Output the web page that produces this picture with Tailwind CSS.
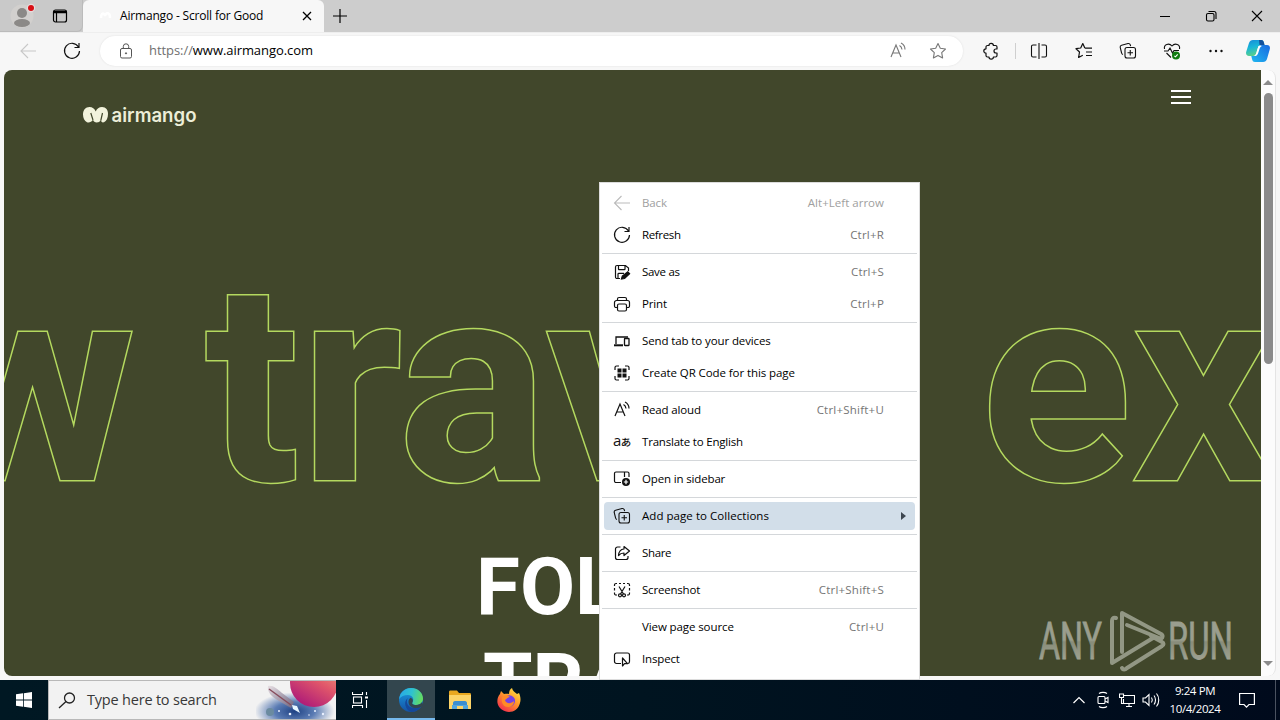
<!DOCTYPE html>
<html lang="en">
<head>
<meta charset="utf-8">
<title>Airmango - Scroll for Good</title>
<script src="https://cdn.jsdelivr.net/npm/@tailwindcss/browser@4"></script>
</head>
<body class="relative flex h-[720px] w-[1280px] flex-col overflow-hidden bg-[#f7f7f7] font-['Open_Sans',sans-serif] text-black">

<!-- Tab strip -->
<header class="flex h-8 shrink-0 bg-[#cdcdcd]">
  <div class="flex w-[83px] items-center rounded-br-md border-r border-b border-[#bbbbbb] bg-[#c9c9c9]">
    <svg class="ml-2.5 h-7 w-7" viewBox="0 0 28 28"><circle cx="12" cy="14" r="11.5" fill="#d2d0ce"/><circle cx="12" cy="11" r="5" fill="#8b8987"/><ellipse cx="12" cy="21" rx="8" ry="4" fill="#8b8987"/><circle cx="21" cy="6" r="4.2" fill="#e6dcdc"/><circle cx="21" cy="6" r="3" fill="#d80f16"/></svg>
    <svg class="ml-3.5 h-4 w-4" viewBox="0 0 16 16" fill="none" stroke="#000" stroke-width="1.2"><rect x="1.5" y="2" width="13" height="12" rx="2"/><path d="M1.5 4h13" stroke-width="2.500"/><path d="M4.5 4v10"/></svg>
  </div>
  <div class="flex w-[241px] items-center rounded-t-md bg-[#f7f7f7] pl-[15px]">
    <svg class="h-4 w-4" viewBox="0 0 16 16"><path d="M3 10c0-5 3-6 4-2 1-4 5-4 5 2" stroke="#fff" stroke-width="2.5" fill="none"/></svg>
    <span class="ml-1.5 w-[182px] text-[12px] tracking-[-0.18px] whitespace-nowrap">Airmango - Scroll for Good</span>
    <svg class="-ml-px h-3 w-3" viewBox="0 0 12 12" stroke="#000" stroke-width="1.3"><path d="M2 2l8 8M10 2l-8 8"/></svg>
  </div>
  <svg class="mt-2 ml-2 h-4 w-4" viewBox="0 0 16 16" stroke="#000" stroke-width="1.2"><path d="M8 1v14M1 8h14"/></svg>
  <div class="ml-auto flex items-center">
    <svg class="w-[46px] h-4" viewBox="0 0 46 16" stroke="#000"><path d="M18 8.500h10"/></svg>
    <svg class="w-[46px] h-4" viewBox="0 0 46 16" stroke="#000" fill="none" stroke-width="1.1"><rect x="18.500" y="5.500" width="7.500" height="7.500" rx="1.500"/><path d="M20.500 3.500h5.500a2 2 0 0 1 2 2v5.500"/></svg>
    <svg class="w-[46px] h-4" viewBox="0 0 46 16" stroke="#000" stroke-width="1.1"><path d="M18 3l10 10M28 3l-10 10"/></svg>
  </div>
</header>

<!-- Toolbar -->
<nav class="flex h-[38px] shrink-0 items-center border-t border-[#eeeeee] pb-px">
  <svg class="ml-5 h-4 w-4" viewBox="0 0 16 16" fill="none" stroke="#c8c8c8" stroke-width="1.1"><path d="M16 8H1M8 1L1 8l7 7"/></svg>
  <svg class="ml-[27px] h-[18px] w-[18px]" viewBox="0 0 18 18" fill="none" stroke="#111" stroke-width="1.2"><path d="M15.500 5A7.500 7.500 0 1 0 16.500 9M16 1v4.500h-4.500"/></svg>
  <div class="ml-[19px] flex h-[30px] w-[863px] items-center rounded-full bg-white shadow-[0_0_2px_#dddddd]">
    <svg class="ml-[18px] h-4 w-4" viewBox="0 0 16 16" fill="none" stroke="#555"><rect x="2.500" y="5.500" width="11" height="9.500" rx="1.500"/><path d="M5.300 5.500V3.500a2.700 2.700 0 0 1 5.400 0v2"/><circle cx="8" cy="10.300" r=".6" fill="#555"/></svg>
    <span class="ml-[15px] text-[13px] tracking-[-0.06px] whitespace-nowrap"><span class="text-[#707070]">https://</span>www.airmango.com</span>
    <svg class="ml-auto h-[18px] w-[18px]" viewBox="0 0 18 18" fill="none" stroke="#777" stroke-width="1.1"><path d="M2 15L7 3l5 12M4 11h6M10.500 3.500c1.500.8 2.300 2 2.500 4M12 1c2.500 1.300 4 3.500 4 6.500"/></svg>
    <svg class="mr-4 ml-[22px] h-[18px] w-[18px]" viewBox="0 0 18 18" fill="none" stroke="#777" stroke-width="1.1" stroke-linejoin="round"><path d="M9 1.500l2.300 4.800 5.200.7-3.800 3.600.9 5.300L9 13.400l-4.600 2.500.9-5.300L1.500 7l5.200-.7z"/></svg>
  </div>
  <div class="ml-1.5 flex w-[44px] justify-center"><svg class="h-[18px] w-[18px]" viewBox="0 0 18 18" fill="none" stroke="#111" stroke-width="1.2" stroke-linejoin="round"><path d="M7 3.500a2.200 2.200 0 0 1 4.400 0H13.500A1.500 1.500 0 0 1 15 5v2h-1a2 2 0 0 0 0 4h1v2.500a1.500 1.500 0 0 1-1.500 1.500H11.400a2.200 2.200 0 0 1-4.400 0H5.500A1.500 1.500 0 0 1 4 13.500v-2.300a2.200 2.200 0 0 1 0-4.400V5A1.500 1.500 0 0 1 5.500 3.500z"/></svg></div>
  <div class="ml-0.5 h-4 w-px bg-[#cfcfcf]"></div>
  <div class="flex w-[46px] justify-center"><svg class="h-[18px] w-[18px]" viewBox="0 0 18 18" fill="none" stroke="#111" stroke-width="1.100"><path d="M6.500 3H3a1.500 1.500 0 0 0-1.500 1.500v9A1.500 1.500 0 0 0 3 15h3.500M11.500 3H15a1.500 1.500 0 0 1 1.500 1.500v9A1.500 1.500 0 0 1 15 15h-3.500M9 1v16"/></svg></div>
  <div class="flex w-[44px] justify-center"><svg class="h-[18px] w-[18px]" viewBox="0 0 18 18" fill="none" stroke="#111" stroke-width="1.2" stroke-linejoin="round"><path d="M9.800 6L7.800 1.500 5.700 6l-4.700.7 3.500 3.300-.9 5.500 4.200-2.300M9.800 6.200H17M11 10h6M11 13.500h6"/></svg></div>
  <div class="flex w-[44px] justify-center"><svg class="h-[18px] w-[18px]" viewBox="0 0 18 18" fill="none" stroke="#111" stroke-width="1.1"><path d="M4 12.500A2 2 0 0 1 2.600 11L1.200 5.500a2 2 0 0 1 1.400-2.300L9 1.500a2 2 0 0 1 2.300 1.400l.3 1.300"/><rect x="6" y="5.500" width="10.500" height="10.500" rx="2"/><path d="M11.250 8v5.500M8.500 10.750H14"/></svg></div>
  <div class="flex w-[44px] justify-center"><svg class="h-[18px] w-[18px]" viewBox="0 0 18 18" fill="none" stroke="#111" stroke-width="1.1"><path d="M1.500 7C.5 2.500 6 .5 9 4c3-3.500 8.500-1.500 7.500 3M1 9h4l2-3 2.500 5 1.500-2.500h5M3.500 11L8 15.500"/><circle cx="13" cy="13.500" r="4" fill="#107c10" stroke="none"/><path d="M11.300 13.800l1.200 1 2.200-2.500" stroke="#fff"/></svg></div>
  <div class="flex w-[44px] justify-center"><svg class="h-4 w-4" viewBox="0 0 16 16" fill="#111"><circle cx="2.500" cy="8" r="1.200"/><circle cx="8" cy="8" r="1.200"/><circle cx="13.500" cy="8" r="1.200"/></svg></div>
  <svg class="ml-2 h-6 w-6" viewBox="0 0 24 24">
    <defs><linearGradient id="ca" x1="0" y1="0" x2=".3" y2="1"><stop offset="0" stop-color="#1689d8"/><stop offset=".5" stop-color="#18b6d8"/><stop offset="1" stop-color="#5ad08a"/></linearGradient><linearGradient id="cb" x1="0" y1="1" x2="1" y2="0"><stop offset="0" stop-color="#20b8f0"/><stop offset="1" stop-color="#1868e0"/></linearGradient></defs>
    <path d="M7 1h8c2 0 2.500 1 3 3l.5 2h-3c-2 0-3 1-3.600 3l-1.500 5c-.6 2-1.400 3-3.400 3H3c-2.500 0-3.500-2-2.700-4.500L3 4c.7-2 2-3 4-3z" fill="url(#ca)"/>
    <path d="M13 1h2c2 0 2.500 1 3 3l.5 2h-5z" fill="#124f9c"/>
    <path d="M17 23H9c-2 0-2.500-1-3-3l-.7-3H8c2 0 3-1 3.600-3l1.500-5c.6-2 1.400-3 3.400-3H21c2.500 0 3.500 2 2.700 4.500L21 20c-.7 2-2 3-4 3z" fill="url(#cb)"/>
    <path d="M12.500 7h3.500c-1.500.5-2 1.500-2.500 3l-1.300 4c-.7 2-1.700 3-3.400 3H8c1.300-.5 1.800-1.600 2.300-3l1-3.500z" fill="#fff"/>
  </svg>
</nav>

<!-- Web page -->
<section class="flex h-[610px] shrink-0 pb-1 pl-1">
  <main class="flex h-[606px] w-[1257px] flex-col overflow-hidden rounded-l-lg bg-[#41472b]">
    <div class="flex h-[150px] shrink-0 items-start justify-between pr-[70px] pl-[79px]">
      <svg class="mt-[33px] h-7 w-[115px]" viewBox="0 0 115 28"><path d="M4 19.300C1.500 18 0 15 0 11.500 0 7 2.500 4 6.500 4c3 0 5 1.500 6.200 4.500C14 5.500 16 4 19 4c4 0 6 3 6 7 0 4-1.500 7-4 8.300-1.800.6-3-.5-3-2.300-1.200 1.700-2.500 2.500-4.200 2.500-2 0-3.200-1-3.800-2.700C8.500 19 6 20.200 4 19.300z" fill="#f2f3dc"/><path d="M10 17L7.800 10M17.800 17.500L19.500 10" stroke="#41472b" stroke-width="1.200" fill="none"/><text x="28.500" y="18.800" textLength="85" lengthAdjust="spacingAndGlyphs" font-family="Inter, sans-serif" font-size="18.500" font-weight="600" fill="#eceed8">airmango</text></svg>
      <div class="mt-5 flex w-5 flex-col gap-1"><i class="h-0.5 bg-white"></i><i class="h-0.5 bg-white"></i><i class="h-0.5 bg-white"></i></div>
    </div>
    <div class="-ml-[74px] h-[319px] shrink-0 font-[Roboto,sans-serif] text-[280px] leading-[328px] font-bold whitespace-pre text-[#41472b] [paint-order:stroke_fill] [-webkit-text-stroke:3px_#b4d95f]">w travel experience</div>
    <div class="h-[240px] pl-[472px] font-[Roboto,sans-serif] text-[80px] leading-[96px] font-bold whitespace-nowrap text-white"><div>FOLLOW</div><div class="pl-[7px]">TRAVEL</div></div>
  </main>
  <aside class="flex w-[15px] flex-col items-center rounded-r-lg border-r border-[#e4e4e4] bg-[#fcfcfc]">
    <svg class="mt-2 h-2.5 w-2.5 shrink-0" viewBox="0 0 10 10"><path d="M5 2l5 5H0z" fill="#8b8b8b"/></svg>
    <div class="mt-[5px] h-[271px] w-[9px] shrink-0 rounded-full bg-[#8b8b8b]"></div>
    <svg class="mt-auto mb-2 h-2.5 w-2.5 shrink-0" viewBox="0 0 10 10"><path d="M0 3h10L5 8z" fill="#8b8b8b"/></svg>
  </aside>
</section>

<!-- Taskbar -->
<footer class="flex h-10 shrink-0 items-stretch bg-linear-to-r from-[#001823] via-[#001420] to-[#000a1c] text-white">
  <div class="flex w-12 items-center justify-center"><svg class="h-4 w-4" viewBox="0 0 16 16" fill="#fff"><path d="M0 2.300L7 1.300V7.600H0zM7.800 1.200L16 0v7.600H7.800zM0 8.400h7v6.300l-7-1zM7.800 8.400H16V16l-8.200-1.200z"/></svg></div>
  <div class="flex w-72 items-center border border-[#b8b8b8] border-r-0 bg-[#f2f2f2]">
    <svg class="ml-[9px] h-[18px] w-[18px]" viewBox="0 0 18 18" fill="none" stroke="#222" stroke-width="1.3"><circle cx="11.500" cy="7" r="5"/><path d="M8 10.500L1 17"/></svg>
    <span class="ml-[11px] text-[14.500px] tracking-[-0.2px] whitespace-nowrap text-[#383838]">Type here to search</span>
    <svg class="ml-auto h-[38px] w-20" viewBox="0 0 80 38">
      <defs><linearGradient id="pl" x1=".8" y1="0" x2=".2" y2="1"><stop offset="0" stop-color="#f0a07a"/><stop offset=".45" stop-color="#e0566a"/><stop offset="1" stop-color="#a8147a"/></linearGradient><radialGradient id="neb" cx=".48" cy=".8" r=".5"><stop offset="0" stop-color="#1f4284"/><stop offset=".5" stop-color="#5b7cb4"/><stop offset="1" stop-color="#f2f2f2"/></radialGradient><linearGradient id="rk" x1="0" y1="0" x2="1" y2="1"><stop offset="0" stop-color="#e8e0e4"/><stop offset="1" stop-color="#6c6480"/></linearGradient></defs>
      <rect width="80" height="38" fill="url(#neb)"/>
      <circle cx="58" cy="2" r="24" fill="url(#pl)"/>
      <path d="M12 5c5-1 9 3 14 7l12 9-3 6-12-7C15 15 11 11 12 5z" fill="url(#rk)"/><path d="M13 8l22 16" stroke="#874c5c" stroke-width="1.500"/>
      <path d="M36 24l5 1 3 7-7-4z" fill="#e7f6ff"/><circle cx="14" cy="31" r="4" fill="#6b8ba0"/>
      <g fill="#e8f0ff"><circle cx="23" cy="30" r="1"/><circle cx="34" cy="33" r="1.300"/><circle cx="59" cy="30" r="1"/><circle cx="67" cy="33" r="1.200"/><circle cx="53" cy="34" r=".8"/></g>
    </svg>
  </div>
  <div class="flex w-[51px] items-center justify-center pr-1"><svg class="h-4 w-4" viewBox="0 0 16 16" fill="none" stroke="#fff" stroke-width="1.1"><path d="M.5 0v2.500h10V0M.5 16v-2.500h10V16M14.500 0v3M14.500 8v8"/><rect x="1.500" y="5" width="8" height="6"/><path d="M13 5.500h3" stroke-width="2"/></svg></div>
  <div class="flex w-12 items-center justify-center border-b-2 border-[#76b9ed] bg-[#33464e]">
    <svg class="mt-0.5 h-6 w-6" viewBox="0 0 24 24"><defs><linearGradient id="ea" x1="0" y1=".3" x2="1" y2=".5"><stop offset="0" stop-color="#28a8e8"/><stop offset=".5" stop-color="#2fc2d0"/><stop offset="1" stop-color="#66dd5c"/></linearGradient><linearGradient id="eb" x1="0" y1="0" x2="0" y2="1"><stop offset="0" stop-color="#1b9de2"/><stop offset="1" stop-color="#1452a4"/></linearGradient></defs>
    <circle cx="12" cy="12" r="12" fill="url(#eb)"/><path d="M.2 11C1 4 6 0 12 0c7 0 12 5 12 10.500 0 4-3 6.500-7 6.500-3 0-4.500-1-3.500-2.700C15.500 11 13.500 7 9 7c-4 0-7 1.500-8.800 4z" fill="url(#ea)"/><path d="M9 10c-3 4 0 10 6 10 3 0 5-.7 7.500-2-2 3.500-6 6-10 6C6 22 4 13 9 10z" fill="#15489a"/><path d="M13.500 14.300c-1 1.700.5 2.700 3.500 2.700 2.700 0 4.700-1 5.900-2.800L24 17l-1.800 1.700C17 21.500 10 20 9.500 14c0-2 1-3.500 2-4.200 2 .8 3 2.500 2 4.500z" fill="#33464e"/></svg>
  </div>
  <div class="flex w-[49px] items-center justify-center"><svg class="h-[22px] w-[22px]" viewBox="0 0 22 22"><path d="M0 3c0-1 .5-1.500 1.500-1.500H8L10 4h10.500c1 0 1.500.5 1.500 1.500V8H0z" fill="#e9a820"/><path d="M0 6h22v14H0z" fill="#fcd468"/><path d="M4 20v-6c0-1 .7-2 2-2h10c1.300 0 2 1 2 2v6h-4v-3.500H8V20z" fill="#3b8ed0"/><path d="M3 16h16v4h-5v-3H8v3H3z" fill="#54a6dc"/></svg></div>
  <div class="flex w-[49px] items-center justify-center"><svg class="h-6 w-6" viewBox="0 0 24 24"><defs><linearGradient id="ff" x1=".9" y1="0" x2=".2" y2="1"><stop offset="0" stop-color="#ffe94a"/><stop offset=".45" stop-color="#ff9a2a"/><stop offset="1" stop-color="#f2264f"/></linearGradient></defs><path d="M3 6l1-3 3 3c2-.5 4-.5 5 0 0-3 1-5 3-6 .5 3 3 4 5 6l2-1c1.500 3 2 7 1 10-1.500 6-6 9-11 9S1.500 20.500.5 15C0 11.500 1 8 3 6z" fill="url(#ff)"/><circle cx="12.300" cy="13" r="5.800" fill="#7542e5"/><path d="M5 9c3-2 6-2 8 0-3 .5-3 2-5 3 1 4 6 4 9 1 0 4-3 6-6 6-5 0-7-5-6-10z" fill="#ff8a26"/></svg></div>
  <div class="ml-auto flex items-center">
    <svg class="h-3 w-3" viewBox="0 0 12 12" fill="none" stroke="#fff" stroke-width="1.2"><path d="M0.500 9L6 3.500 11.500 9"/></svg>
    <svg class="ml-2.5 h-[18px] w-4" viewBox="0 0 16 18" fill="none" stroke="#fff" stroke-width="1.100"><path d="M4 2.500c2-1.500 6-1.500 8 0M4 15.500c2 1.500 6 1.500 8 0"/><rect x="3" y="5.500" width="7" height="7" rx="1"/><path d="M10 8l3-1.500v5L10 10"/></svg>
    <svg class="ml-2 h-4 w-4" viewBox="0 0 16 16" fill="none" stroke="#fff" stroke-width="1.100"><path d="M4.500 3.500h11v8H4.500V7M7 14.500h6M10 11.500v3"/><path d="M.5 2h4v3.500h-4zM2.500 5.500v6h2"/></svg>
    <svg class="ml-[7px] h-4 w-[18px]" viewBox="0 0 18 16" fill="none" stroke="#fff" stroke-width="1.1"><path d="M1 6h2.500L7 2.500v11L3.500 10H1zM9.500 5.500c1 1.500 1 3.500 0 5M12 3.500c2 2.500 2 6.500 0 9M14.500 1.500c3 3.500 3 9.500 0 13"/></svg>
    <div class="ml-[7px] w-[56px] text-center text-[11.500px] leading-[18px] tracking-[-0.4px] whitespace-nowrap"><div>9:24 PM</div><div>10/4/2024</div></div>
    <svg class="ml-4 h-[18px] w-4" viewBox="0 0 16 18" fill="none" stroke="#fff" stroke-width="1.2"><path d="M.6 2.500h14.800v11H10l-2.500 2.700L5 13.500H.6z"/></svg>
    <div class="ml-5 h-10 w-px bg-[#4a5260]"></div><div class="w-1"></div>
  </div>
</footer>

<!-- Watermark -->
<svg class="absolute top-[606px] left-[1034px] h-[70px] w-[202px] opacity-60" viewBox="0 0 202 70">
  <defs><linearGradient id="wm" x1="0" y1="14" x2="0" y2="54" gradientUnits="userSpaceOnUse"><stop offset="0" stop-color="#d6d8d0"/><stop offset=".5" stop-color="#d6d8d0"/><stop offset=".55" stop-color="#b8bbae"/><stop offset="1" stop-color="#dcded6"/></linearGradient></defs>
  <g fill="url(#wm)" stroke="url(#wm)" stroke-width=".8" font-family="Roboto, sans-serif" font-size="52"><text x="5" y="53" textLength="63" lengthAdjust="spacingAndGlyphs">ANY</text><text x="134" y="53" textLength="65" lengthAdjust="spacingAndGlyphs">RUN</text></g>
  <g fill="none" stroke="#c9ccc0" stroke-width="4" stroke-linecap="round" stroke-linejoin="round"><path d="M82 12c-3-1-4 1-4 3v42l41-25M88 46V7l39 21c3 2 1 6-2 4L93 19M88 62c1 2 3 2 5 0l35-22c2-1 2-3 0-4l-11-6"/></g>
</svg>

<!-- Context menu -->
<div class="absolute top-[182px] left-[599px] flex h-[498px] w-[321px] flex-col border border-[#dcdcdc] bg-white py-1 text-[11.500px] tracking-[-0.15px] whitespace-nowrap [&_svg]:h-[18px] [&_svg]:w-[18px] [&_svg]:shrink-0">
  <div class="flex h-8 shrink-0 items-center pr-[35px] pl-[13px] text-[#a0a0a0]"><svg viewBox="0 0 18 18" fill="none" stroke="#bbb" stroke-width="1.1"><path d="M17 9H1.500M8.500 2l-7 7 7 7"/></svg><span class="ml-[11px]">Back</span><span class="ml-auto tracking-[0.02px]">Alt+Left arrow</span></div>
  <div class="flex h-8 shrink-0 items-center pr-[35px] pl-[13px]"><svg viewBox="0 0 18 18" fill="none" stroke="#111" stroke-width="1.2"><path d="M15.500 5A7.500 7.500 0 1 0 16.500 9M16 1v4.500h-4.500"/></svg><span class="ml-[11px] tracking-[-0.35px]">Refresh</span><span class="ml-auto tracking-[0.2px] text-[#757575]">Ctrl+R</span></div>
  <hr class="mx-0.5 my-0.5 shrink-0 border-[#d4d7da]">
  <div class="flex h-8 shrink-0 items-center pr-[35px] pl-[13px]"><svg viewBox="0 0 18 18" fill="none" stroke="#111" stroke-width="1.2"><path d="M7 15.500H4A1.500 1.500 0 0 1 2.500 14V4A1.500 1.500 0 0 1 4 2.500h8.500L15.500 5v3M5.500 2.500V6a.7.7 0 0 0 .7.700h5.100A.7.700 0 0 0 12 6V2.500M5 15.500v-4.300a.8.8 0 0 1 .8-.8H11"/><path d="M8.500 16l.8-3 5.500-4.300 1.800 2-5 4.800z" fill="#111"/></svg><span class="ml-[11px] tracking-[-0.3px]">Save as</span><span class="ml-auto tracking-[0.2px] text-[#757575]">Ctrl+S</span></div>
  <div class="flex h-8 shrink-0 items-center pr-[35px] pl-[13px]"><svg viewBox="0 0 18 18" fill="none" stroke="#111" stroke-width="1.2"><path d="M4.500 12.500H3A1.500 1.500 0 0 1 1.500 11V7.500a2 2 0 0 1 2-2h11a2 2 0 0 1 2 2V11a1.500 1.500 0 0 1-1.500 1.500h-1.500M4.500 5.500V4A1.500 1.500 0 0 1 6 2.500h6A1.500 1.500 0 0 1 13.500 4v1.500"/><rect x="4.500" y="9" width="9" height="7" rx="1.500"/></svg><span class="ml-[11px]">Print</span><span class="ml-auto tracking-[0.2px] text-[#757575]">Ctrl+P</span></div>
  <hr class="mx-0.5 my-0.5 shrink-0 border-[#d4d7da]">
  <div class="flex h-8 shrink-0 items-center pr-[35px] pl-[13px]"><svg viewBox="0 0 18 18" fill="none" stroke="#111" stroke-width="1.300"><path d="M3 12V5h12"/><path d="M1 13.300h9" stroke-width="2"/><rect x="11.500" y="6.500" width="4.500" height="7" rx=".5"/></svg><span class="ml-[11px] tracking-[-0.11px]">Send tab to your devices</span></div>
  <div class="flex h-8 shrink-0 items-center pr-[35px] pl-[13px]"><svg viewBox="0 0 18 18" fill="none" stroke="#111" stroke-width="1.200"><path d="M2 6V3.500A1.500 1.500 0 0 1 3.500 2H6M12 2h2.500A1.500 1.500 0 0 1 16 3.500V6M2 12v2.500A1.500 1.500 0 0 0 3.500 16H6M12 16h2.500a1.500 1.500 0 0 0 1.500-1.500V12"/><path d="M4.500 4.500h4v4h-4zM9.500 4.500h4v4h-4zM4.500 9.500h4v4h-4zM9.500 9.500h4v4h-4z" fill="#111" stroke="none"/></svg><span class="ml-[11px] tracking-[-0.08px]">Create QR Code for this page</span></div>
  <hr class="mx-0.5 my-0.5 shrink-0 border-[#d4d7da]">
  <div class="flex h-8 shrink-0 items-center pr-[35px] pl-[13px]"><svg viewBox="0 0 18 18" fill="none" stroke="#111" stroke-width="1.2"><path d="M2 15L7 3l5 12M4 11h6M10.500 3.500c1.500.8 2.300 2 2.500 4M12 1c2.500 1.300 4 3.500 4 6.500"/></svg><span class="ml-[11px]">Read aloud</span><span class="ml-auto tracking-[0.22px] text-[#757575]">Ctrl+Shift+U</span></div>
  <div class="flex h-8 shrink-0 items-center pr-[35px] pl-[13px]"><svg viewBox="0 0 18 18"><text x="0" y="13" font-family="Open Sans, sans-serif" font-size="15" fill="#111">a</text><text x="7.800" y="13" font-family="Noto Sans CJK JP, sans-serif" font-size="10.500" font-weight="500" fill="#111">あ</text></svg><span class="ml-[11px] tracking-[-0.2px]">Translate to English</span></div>
  <hr class="mx-0.5 my-0.5 shrink-0 border-[#d4d7da]">
  <div class="flex h-8 shrink-0 items-center pr-[35px] pl-[13px]"><svg viewBox="0 0 18 18" fill="none" stroke="#111" stroke-width="1.2"><path d="M8 12.500H3A1.500 1.500 0 0 1 1.500 11V3.500A1.500 1.500 0 0 1 3 2h11.500A1.500 1.500 0 0 1 16 3.500V7M11.500 2v5"/><circle cx="13" cy="12" r="4" fill="#111" stroke="none"/><path d="M13 9.800v4.400M10.800 12h4.400" stroke="#fff"/></svg><span class="ml-[11px]">Open in sidebar</span></div>
  <hr class="mx-0.5 my-0.5 shrink-0 border-[#d4d7da]">
  <div class="mx-1 my-0.5 flex h-7 shrink-0 items-center rounded bg-[#d2dee9] pr-[9px] pl-[9px]"><svg viewBox="0 0 18 18" fill="none" stroke="#111" stroke-width="1.1"><path d="M4 12.500A2 2 0 0 1 2.600 11L1.200 5.500a2 2 0 0 1 1.400-2.300L9 1.500a2 2 0 0 1 2.300 1.400l.3 1.300"/><rect x="6" y="5.500" width="10.500" height="10.500" rx="2"/><path d="M11.250 8v5.500M8.500 10.750H14"/></svg><span class="ml-[11px] tracking-[0.05px]">Add page to Collections</span><i class="ml-auto border-y-4 border-l-[5px] border-y-transparent border-l-[#3d4650]"></i></div>
  <hr class="mx-0.5 my-0.5 shrink-0 border-[#d4d7da]">
  <div class="flex h-8 shrink-0 items-center pr-[35px] pl-[13px]"><svg viewBox="0 0 18 18" fill="none" stroke="#111" stroke-width="1.2" stroke-linejoin="round"><path d="M7.500 3H4.500a2 2 0 0 0-2 2v8.500a2 2 0 0 0 2 2H13a2 2 0 0 0 2-2V12"/><path d="M11 2.500l5.500 4.500L11 11.500V9c-2.500 0-4 .7-5.500 2.500.3-4 2-6.200 5.500-6.500z"/></svg><span class="ml-[11px] tracking-[-0.35px]">Share</span></div>
  <hr class="mx-0.5 my-0.5 shrink-0 border-[#d4d7da]">
  <div class="flex h-8 shrink-0 items-center pr-[35px] pl-[13px]"><svg viewBox="0 0 18 18" fill="none" stroke="#111" stroke-width="1.2"><path d="M1.500 5V4A1.500 1.500 0 0 1 3 2.500h1M6 2.500h2M10 2.500h2M14 2.500h1A1.500 1.500 0 0 1 16.500 4v1M1.500 7v2.500M16.500 7v2.500M1.500 11.500v1A1.500 1.500 0 0 0 3 14h1M16.500 11.500v1A1.500 1.500 0 0 1 15 14h-1M6 5.500l4.500 7.500M12 5.500L7.500 13"/><circle cx="7" cy="14.300" r="1.500"/><circle cx="11" cy="14.300" r="1.500"/></svg><span class="ml-[11px] tracking-[-0.2px]">Screenshot</span><span class="ml-auto tracking-[0.22px] text-[#757575]">Ctrl+Shift+S</span></div>
  <hr class="mx-0.5 my-0.5 shrink-0 border-[#d4d7da]">
  <div class="flex h-8 shrink-0 items-center pr-[35px] pl-[42px]"><span class="tracking-[-0.1px]">View page source</span><span class="ml-auto tracking-[0.2px] text-[#757575]">Ctrl+U</span></div>
  <div class="flex h-8 shrink-0 items-center pr-[35px] pl-[13px]"><svg viewBox="0 0 18 18" fill="none" stroke="#111" stroke-width="1.2" stroke-linejoin="round"><path d="M8 13.500H3.500a2 2 0 0 1-2-2V5a2 2 0 0 1 2-2h11a2 2 0 0 1 2 2v6.500a2 2 0 0 1-1.500 2"/><path d="M9.500 8v8l2-2.300H14.500z"/></svg><span class="ml-[11px]">Inspect</span></div>
</div>
</body>
</html>
